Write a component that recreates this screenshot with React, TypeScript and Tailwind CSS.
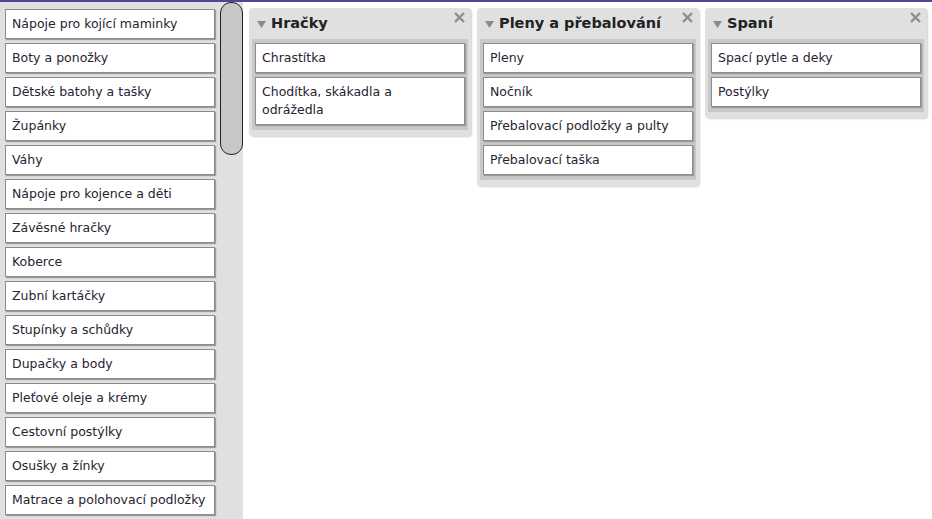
const leftItems = [
  'Nápoje pro kojící maminky',
  'Boty a ponožky',
  'Dětské batohy a tašky',
  'Župánky',
  'Váhy',
  'Nápoje pro kojence a děti',
  'Závěsné hračky',
  'Koberce',
  'Zubní kartáčky',
  'Stupínky a schůdky',
  'Dupačky a body',
  'Pleťové oleje a krémy',
  'Cestovní postýlky',
  'Osušky a žínky',
  'Matrace a polohovací podložky',
]

const columns = [
  { title: 'Hračky', items: ['Chrastítka', 'Chodítka, skákadla a odrážedla'] },
  { title: 'Pleny a přebalování', items: ['Pleny', 'Nočník', 'Přebalovací podložky a pulty', 'Přebalovací taška'] },
  { title: 'Spaní', items: ['Spací pytle a deky', 'Postýlky'] },
]

function Item({ label, narrow = false }: { label: string; narrow?: boolean }) {
  return (
    <div
      className={`bg-white border border-[#8c8c8c] shadow-[1px_1px_1px_#9a9a9a] pl-[6px] py-[5px] text-[12.5px] leading-[18px] text-[#2a2230] ${
        narrow ? 'pr-[10px]' : 'pr-[4px]'
      }`}
    >
      {label}
    </div>
  )
}

function Column({ title, items }: { title: string; items: string[] }) {
  return (
    <div className="w-[222px] bg-[#e0e0e0] rounded-[4px] shadow-[1px_1px_2px_#d0d0d0] p-[3px] pb-[6px]">
      <div className="relative h-[28px] flex items-center pl-[5px] pb-[2px]">
        <svg width="9" height="7" viewBox="0 0 9 7" className="mr-[5px] mt-[1px]">
          <path d="M0 0 H9 L4.5 7 Z" fill="#8a8a8a" />
        </svg>
        <span className="font-bold text-[14.5px] text-[#222]">{title}</span>
        <svg width="11" height="11" viewBox="0 0 11 11" className="absolute right-[3px] top-[1px]">
          <path d="M1 1 L10 10 M10 1 L1 10" stroke="#8e8e8e" strokeWidth="2.4" />
        </svg>
      </div>
      <div className="bg-[#c8c8c8] p-[3px] pt-[4px] pb-[5px] flex flex-col gap-[4px]">
        {items.map((it) => (
          <Item key={it} label={it} narrow />
        ))}
      </div>
    </div>
  )
}

export default function App() {
  return (
    <div
      className="w-[932px] h-[519px] overflow-hidden bg-white border-t-2 border-[#4a4a8e] flex"
      style={{ fontFamily: '"DejaVu Sans", Verdana, sans-serif' }}
    >
      <div className="w-[243px] bg-[#e0e0e0] flex">
        <div className="w-[220px] pl-[5px] pr-[5px] pt-[7px] flex flex-col gap-[4px]">
          {leftItems.map((it) => (
            <Item key={it} label={it} />
          ))}
        </div>
        <div className="w-[23px]">
          <div className="h-[153px] bg-[#c8c8c8] border border-[#222] rounded-[11px]" />
        </div>
      </div>
      <div className="flex items-start gap-[6px] pl-[6px] pt-[6px]">
        {columns.map((c) => (
          <Column key={c.title} title={c.title} items={c.items} />
        ))}
      </div>
    </div>
  )
}
